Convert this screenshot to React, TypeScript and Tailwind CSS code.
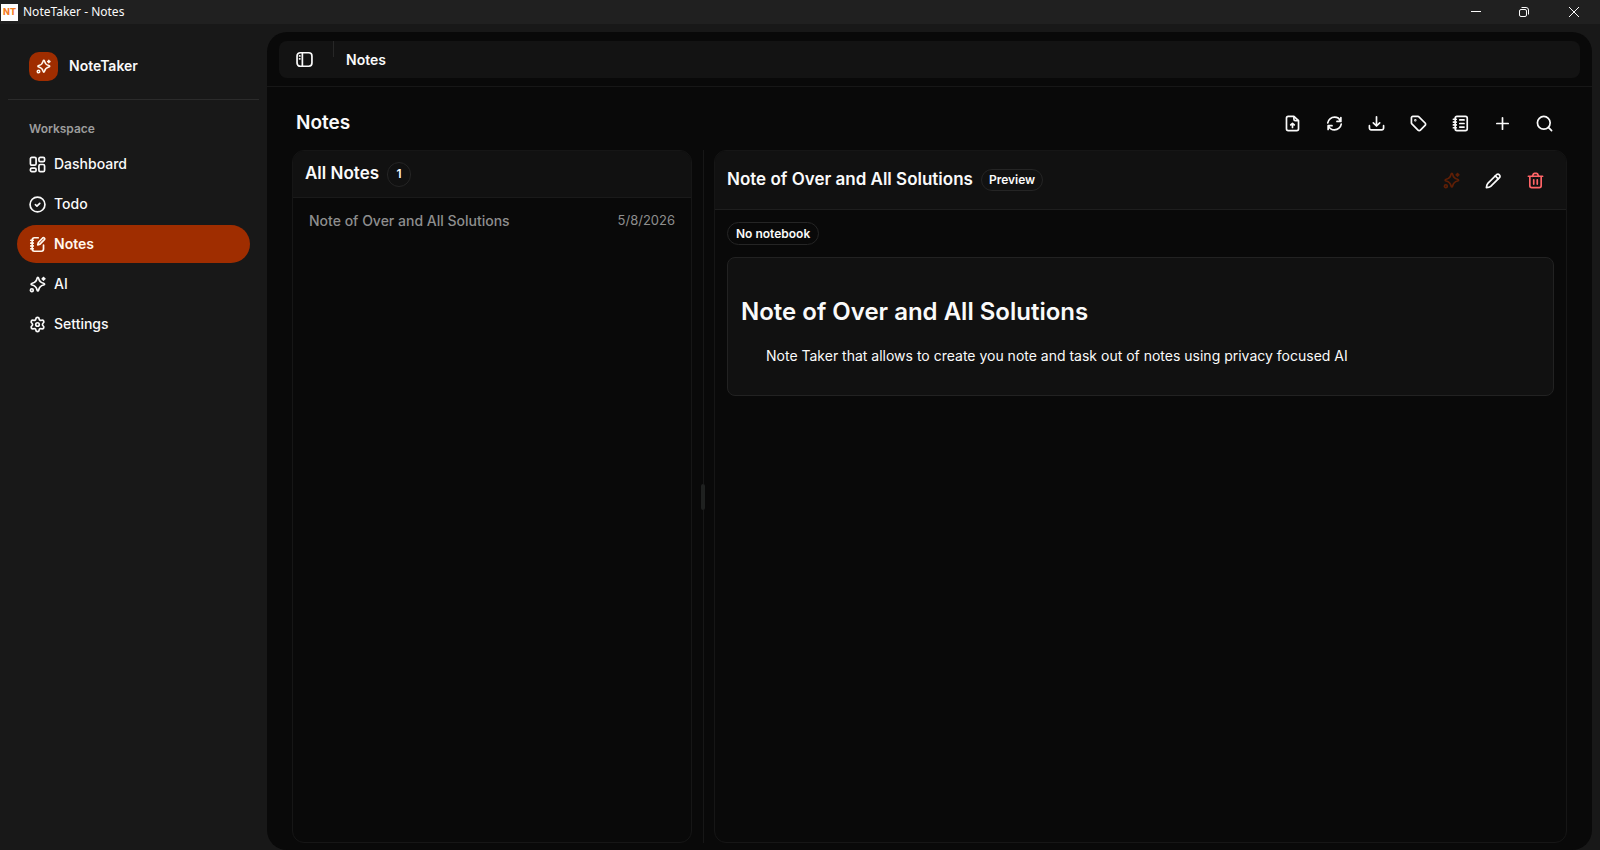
import type { ReactNode } from 'react'

type IconProps = { className?: string }

function Icon({ className = 'size-[17px]', children }: IconProps & { children: ReactNode }) {
  return (
    <svg
      viewBox="0 0 24 24"
      fill="none"
      stroke="currentColor"
      strokeWidth={2.4}
      strokeLinecap="round"
      strokeLinejoin="round"
      aria-hidden="true"
      className={`shrink-0 ${className}`}
    >
      {children}
    </svg>
  )
}

function SparklesIcon({ className }: IconProps) {
  return (
    <Icon className={className}>
      <path d="M12.5 2c.6 0 .9.6 1.1 1.3.9 4 3 6.1 6.9 7 .8.2 1.5.6 1.5 1.200s-.7 1-1.500 1.200c-3.900.9-6 3-6.900 7-.2.7-.5 1.300-1.100 1.300s-.9-.6-1.100-1.300c-.9-4-3-6.100-6.900-7-.8-.2-1.500-.6-1.500-1.200s.7-1 1.500-1.200c3.900-.9 6-3 6.900-7 .2-.7.500-1.300 1.100-1.300Z" />
      <path d="M20.500 2.200 21.200 3.300 22.300 4 21.200 4.700 20.500 5.800 19.800 4.700 18.700 4 19.800 3.300Z" />
      <circle cx="4" cy="20" r="2" />
    </Icon>
  )
}

function DashboardIcon() {
  return (
    <Icon>
      <rect x="2" y="2" width="8" height="11" rx="2" />
      <rect x="14" y="2" width="8" height="6" rx="2" />
      <rect x="2" y="17" width="8" height="5" rx="2" />
      <rect x="14" y="12" width="8" height="10" rx="2" />
    </Icon>
  )
}

function TodoIcon() {
  return (
    <Icon>
      <circle cx="12" cy="12" r="10.500" />
      <path d="m9 12.300 2.200 2 4-3.800" />
    </Icon>
  )
}

function NoteEditIcon() {
  return (
    <Icon>
      <path d="M13 2.500H7.500a3 3 0 0 0-3 3v13a3 3 0 0 0 3 3h10a3 3 0 0 0 3-3V13" />
      <path d="M2.500 6h3.500M2.500 10h3.500M2.500 14h3.500M2.500 18h3.500" />
      <path d="M19.300 2.800a1.700 1.700 0 0 1 2.400 2.400L15.500 11.500l-3.200 1 .9-3.300Z" />
    </Icon>
  )
}

function SettingsIcon() {
  return (
    <Icon>
      <path d="M9.671 4.136a2.340 2.340 0 0 1 4.659 0 2.340 2.340 0 0 0 3.319 1.915 2.340 2.340 0 0 1 2.330 4.033 2.340 2.340 0 0 0 0 3.831 2.340 2.340 0 0 1-2.330 4.033 2.340 2.340 0 0 0-3.319 1.915 2.340 2.340 0 0 1-4.659 0 2.340 2.340 0 0 0-3.320-1.915 2.340 2.340 0 0 1-2.330-4.033 2.340 2.340 0 0 0 0-3.831A2.340 2.340 0 0 1 6.350 6.051a2.340 2.340 0 0 0 3.319-1.915" />
      <circle cx="12" cy="12" r="2.500" />
    </Icon>
  )
}

function SidebarIcon() {
  return (
    <Icon>
      <rect x="1.500" y="2.500" width="21" height="19" rx="4.500" />
      <path d="M9 2.500v19M5 7h.5M5 11h.5" />
    </Icon>
  )
}

function FileUploadIcon() {
  return (
    <Icon>
      <path d="M14 2H6A2.500 2.500 0 0 0 3.500 4.500v15A2.500 2.500 0 0 0 6 22h12a2.500 2.500 0 0 0 2.500-2.500V8Z" />
      <path d="M14 2.500V6a2 2 0 0 0 2 2h4M12 17.500v-5.500M9.500 14 12 11.800l2.500 2.200" />
    </Icon>
  )
}

function RefreshIcon() {
  return (
    <Icon>
      <path d="M21 3.500V9h-5.500M20.500 8.500C19 5 15.800 3 12 3c-4.800 0-8.800 3.600-9.500 8" />
      <path d="M3 20.500V15h5.500M3.500 15.500C5 19 8.200 21 12 21c4.800 0 8.800-3.600 9.500-8" />
    </Icon>
  )
}

function DownloadIcon() {
  return (
    <Icon>
      <path d="M12 2.500V15M7.500 11l4.500 4.500 4.500-4.500" />
      <path d="M2 15v3.500a2.500 2.500 0 0 0 2.500 2.500h15a2.500 2.500 0 0 0 2.500-2.500V15" />
    </Icon>
  )
}

function TagIcon() {
  return (
    <Icon>
      <path d="M12.600 2.600A2 2 0 0 0 11.200 2H4a2 2 0 0 0-2 2v7.200a2 2 0 0 0 .6 1.400l8.700 8.700a2.400 2.400 0 0 0 3.400 0l6.600-6.600a2.400 2.400 0 0 0 0-3.400Z" />
      <circle cx="7.500" cy="7.500" r=".5" fill="currentColor" />
    </Icon>
  )
}

function NotebookIcon() {
  return (
    <Icon>
      <rect x="4.500" y="2" width="17" height="20" rx="2.500" />
      <path d="M2 6h4M2 10h4M2 14h4M2 18h4M11 7h6M11 12h6M11 17h6" />
    </Icon>
  )
}

function PlusIcon() {
  return (
    <Icon>
      <path d="M12 4v16M4 12h16" />
    </Icon>
  )
}

function SearchIcon() {
  return (
    <Icon>
      <circle cx="11" cy="11" r="9" />
      <path d="m17.500 17.500 4.500 4.500" />
    </Icon>
  )
}

function PencilIcon() {
  return (
    <Icon>
      <path d="M16.500 3.500a3.100 3.100 0 0 1 4.300 4.200L8 20.200c-1.500 1.200-3.600 1.600-6 1.800.2-2.500.6-4.500 2-6Z" />
      <path d="m14.500 5.500 4.200 4.200" />
    </Icon>
  )
}

function TrashIcon() {
  return (
    <Icon>
      <path d="M4 6.500v12.800A2.700 2.700 0 0 0 6.700 22h10.600a2.700 2.700 0 0 0 2.700-2.700V6.500M2 6h20M7.500 6l1-2.300A2.500 2.500 0 0 1 10.700 2h2.600a2.500 2.500 0 0 1 2.200 1.700l1 2.300M9.500 11v6M14.500 11v6" />
    </Icon>
  )
}

const NAV_ITEMS = [
  { label: 'Dashboard', icon: <DashboardIcon /> },
  { label: 'Todo', icon: <TodoIcon /> },
  { label: 'Notes', icon: <NoteEditIcon />, active: true },
  { label: 'AI', icon: <SparklesIcon /> },
  { label: 'Settings', icon: <SettingsIcon /> },
]

const TOOLBAR_ACTIONS = [
  { label: 'Import note', icon: <FileUploadIcon /> },
  { label: 'Refresh', icon: <RefreshIcon /> },
  { label: 'Download', icon: <DownloadIcon /> },
  { label: 'Tags', icon: <TagIcon /> },
  { label: 'Notebooks', icon: <NotebookIcon /> },
  { label: 'New note', icon: <PlusIcon /> },
  { label: 'Search', icon: <SearchIcon /> },
]

const NOTES = [{ title: 'Note of Over and All Solutions', date: '5/8/2026' }]

function IconButton({ label, className = '', children }: { label: string; className?: string; children: ReactNode }) {
  return (
    <button type="button" aria-label={label} className={`grid size-[38px] place-items-center rounded-full ${className}`}>
      {children}
    </button>
  )
}

function TitleBar() {
  return (
    <div className="flex h-6 shrink-0 items-center justify-between bg-[#202020] px-px">
      <div className="flex items-center gap-[5px]">
        <span className="grid size-[17px] place-items-center bg-white text-[9px] font-extrabold text-[#f57c1f]">NT</span>
        <span className="font-['Noto_Sans','Open_Sans',sans-serif] text-xs">NoteTaker - Notes</span>
      </div>
      <div className="flex h-full">
        <button type="button" aria-label="Minimize" className="grid w-12 place-items-center">
          <svg viewBox="0 0 12 12" className="size-3" stroke="currentColor" fill="none" aria-hidden="true">
            <path d="M1 5.500h10" />
          </svg>
        </button>
        <button type="button" aria-label="Restore" className="grid w-12 place-items-center">
          <svg viewBox="0 0 12 12" className="size-3" stroke="currentColor" fill="none" aria-hidden="true">
            <rect x="1.500" y="3.500" width="7" height="7" rx="1.500" />
            <path d="M3.500 1.500H8A2.500 2.500 0 0 1 10.500 4v4.500" />
          </svg>
        </button>
        <button type="button" aria-label="Close" className="grid w-[51px] place-items-center">
          <svg viewBox="0 0 12 12" className="size-3" stroke="currentColor" fill="none" aria-hidden="true">
            <path d="m1 1 10 10M11 1 1 11" />
          </svg>
        </button>
      </div>
    </div>
  )
}

function Sidebar() {
  return (
    <aside className="w-[267px] shrink-0 p-2">
      <div className="flex h-[68px] items-center gap-[11px] border-b border-[#2b2b2b] px-[21px] pt-px">
        <span className="grid size-[29px] place-items-center rounded-[10px] bg-[#9f2d00] text-[#fff7ed]">
          <SparklesIcon className="size-[15px]" />
        </span>
        <span className="text-sm font-semibold">NoteTaker</span>
      </div>
      <nav aria-label="Workspace" className="px-[9px] pt-3">
        <h2 className="flex h-[33px] items-center px-3 pt-px text-xs font-semibold text-[#9c9c9c]">Workspace</h2>
        <ul className="space-y-0.5">
          {NAV_ITEMS.map((item) => (
            <li key={item.label}>
              <a
                href="#"
                aria-current={item.active ? 'page' : undefined}
                className={`flex h-[38px] items-center gap-2 rounded-full px-3 text-sm ${
                  item.active ? 'bg-[#9f2d00] font-semibold text-[#fff7ed]' : 'font-medium'
                }`}
              >
                {item.icon}
                {item.label}
              </a>
            </li>
          ))}
        </ul>
      </nav>
    </aside>
  )
}

function NoteList() {
  return (
    <section className="flex w-[400px] shrink-0 flex-col overflow-hidden rounded-xl border border-[#161616]">
      <header className="flex h-[47px] shrink-0 items-center gap-2 border-b border-[#1a1a1a] bg-[#111111] px-3">
        <h2 className="text-[17px] font-semibold">All Notes</h2>
        <span className="grid h-[25px] min-w-6 place-items-center rounded-full border border-[#252525] text-xs font-semibold">
          {NOTES.length}
        </span>
      </header>
      <ul className="p-1">
        {NOTES.map((note) => (
          <li key={note.title}>
            <button type="button" className="flex h-[38px] w-full items-center justify-between px-3 text-[#8e8e8e]">
              <span className="text-sm font-medium">{note.title}</span>
              <span className="text-[13px]">{note.date}</span>
            </button>
          </li>
        ))}
      </ul>
    </section>
  )
}

function NoteView() {
  return (
    <section className="flex min-w-0 flex-1 flex-col overflow-hidden rounded-xl border border-[#161616]">
      <header className="flex h-[59px] shrink-0 items-center justify-between border-b border-[#1e1e1e] bg-[#111111] px-3">
        <div className="flex items-center gap-2">
          <h2 className="text-[17px] font-semibold">Note of Over and All Solutions</h2>
          <span className="rounded-full border border-[#252525] px-[7px] py-px text-xs leading-[18px] font-semibold">
            Preview
          </span>
        </div>
        <div className="flex gap-1">
          <IconButton label="Generate with AI" className="text-[#5f1f06]">
            <SparklesIcon />
          </IconButton>
          <IconButton label="Edit note">
            <PencilIcon />
          </IconButton>
          <IconButton label="Delete note" className="text-[#ff6467]">
            <TrashIcon />
          </IconButton>
        </div>
      </header>
      <div className="flex flex-col items-start gap-3 p-3">
        <span className="rounded-full border border-[#252525] px-2 py-px text-xs leading-[19px] font-semibold">
          No notebook
        </span>
        <article className="w-full rounded-lg border border-[#222222] bg-[#111111] px-[13px] pt-9 pb-[25px]">
          <h1 className="text-2xl leading-9 font-semibold">Note of Over and All Solutions</h1>
          <p className="mt-3 pl-[25px] text-sm leading-7">
            Note Taker that allows to create you note and task out of notes using privacy focused AI
          </p>
        </article>
      </div>
    </section>
  )
}

export default function App() {
  return (
    <div className="flex h-screen flex-col overflow-hidden bg-[#181818] font-['Inter','Liberation_Sans',sans-serif] text-[#fafafa]">
      <TitleBar />
      <div className="flex min-h-0 flex-1">
        <Sidebar />
        <main className="mt-2 mr-2 flex min-w-0 flex-1 flex-col rounded-[20px] bg-[#090909]">
          <div className="border-b border-[#171717] px-3 pt-[9px] pb-2">
            <div className="flex h-[37px] items-center rounded-lg bg-[#131313] pl-1.5">
              <IconButton label="Toggle sidebar">
                <SidebarIcon />
              </IconButton>
              <span className="ml-2.5 h-4 w-px self-start bg-[#272727]" />
              <span className="ml-3 text-sm font-semibold">Notes</span>
            </div>
          </div>
          <div className="flex min-h-0 flex-1 flex-col px-[25px] pt-[17px] pb-[7px]">
            <div className="flex h-[38px] items-center justify-between px-1">
              <h1 className="text-[19px] font-semibold">Notes</h1>
              <div className="flex gap-1">
                {TOOLBAR_ACTIONS.map((action) => (
                  <IconButton key={action.label} label={action.label}>
                    {action.icon}
                  </IconButton>
                ))}
              </div>
            </div>
            <div className="mt-2 flex min-h-0 flex-1">
              <NoteList />
              <div role="separator" aria-orientation="vertical" className="flex w-[22px] shrink-0 flex-col items-center">
                <span className="w-px flex-1 bg-[#171717]" />
                <span className="h-[26px] w-1 rounded-full bg-[#1f2120]" />
                <span className="w-px flex-1 bg-[#171717]" />
              </div>
              <NoteView />
            </div>
          </div>
        </main>
      </div>
    </div>
  )
}
